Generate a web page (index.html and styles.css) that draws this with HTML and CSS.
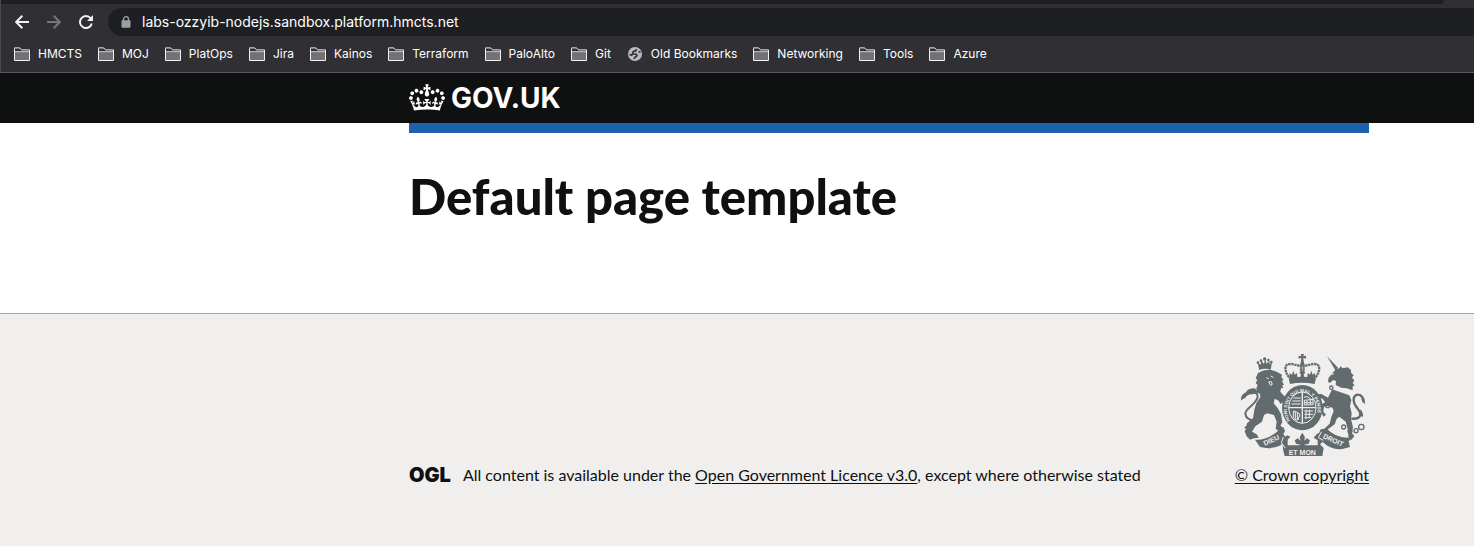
FILE: index.html
```
<!DOCTYPE html>
<html lang="en">
<head>
<meta charset="utf-8">
<title>Default page template</title>
<link rel="stylesheet" href="styles.css">
</head>
<body>
<svg class="defs" width="0" height="0" aria-hidden="true">
  <symbol id="folder" viewBox="0 0 16 14">
    <path d="M.5 1.5V.9h5.2l1.8 2h8v10.6H.5z" fill="none" stroke="#f1f1f1"/>
    <path d="M1 5.5h14V13H1z" fill="#727275"/>
    <path d="M1 4.8h14" stroke="#f1f1f1"/>
  </symbol>
</svg>
<div class="browser">
  <div class="tab-strip"></div>
  <div class="toolbar">
    <button class="tool" type="button" aria-label="Back"><svg width="14" height="14" viewBox="0 0 14 14"><path d="M14 7H1.5M7.3.8 1.2 7l6.1 6.2"/></svg></button>
    <button class="tool tool-off" type="button" aria-label="Forward"><svg width="14" height="14" viewBox="0 0 14 14"><path d="M0 7h12.5M6.7.8 12.8 7l-6.1 6.2"/></svg></button>
    <button class="tool" type="button" aria-label="Reload"><svg width="14" height="14" viewBox="0 0 14 14"><path d="M11.6 3.2A6 6 0 1 0 12.8 8.6"/><path class="solid" d="M14 0v6H8z"/></svg></button>
    <label class="address">
      <svg width="10" height="12" viewBox="0 0 10 12"><path d="M2.5 5V3.2a2.5 2.5 0 0 1 5 0V5" fill="none" stroke="#9aa0a6" stroke-width="1.3"/><rect x=".5" y="4.3" width="9" height="7.5" rx="1" fill="#9aa0a6"/></svg>
      <input class="address-input" type="text" aria-label="Address" value="labs-ozzyib-nodejs.sandbox.platform.hmcts.net">
    </label>
  </div>
  <nav class="bookmarks" aria-label="Bookmarks">
    <a href="#"><svg class="icon"><use href="#folder"/></svg>HMCTS</a>
    <a href="#"><svg class="icon"><use href="#folder"/></svg>MOJ</a>
    <a href="#"><svg class="icon"><use href="#folder"/></svg>PlatOps</a>
    <a href="#"><svg class="icon"><use href="#folder"/></svg>Jira</a>
    <a href="#"><svg class="icon"><use href="#folder"/></svg>Kainos</a>
    <a href="#"><svg class="icon"><use href="#folder"/></svg>Terraform</a>
    <a href="#"><svg class="icon"><use href="#folder"/></svg>PaloAlto</a>
    <a href="#"><svg class="icon"><use href="#folder"/></svg>Git</a>
    <a href="#"><svg class="icon" viewBox="-1 0 16 14"><circle cx="7" cy="7" r="7" fill="#b8bbc0"/><path d="M8.5 2.2Q8 4.6 5.6 4.4q-1.8 1.4-.4 2.6l3.2.2q1.2 2-.8 2.6-1.4.4-1.2 2.2M1.6 7.6l3 .6M10.6 4.6l2 .6" fill="none" stroke="#303034" stroke-width="1.7"/></svg>Old Bookmarks</a>
    <a href="#"><svg class="icon"><use href="#folder"/></svg>Networking</a>
    <a href="#"><svg class="icon"><use href="#folder"/></svg>Tools</a>
    <a href="#"><svg class="icon"><use href="#folder"/></svg>Azure</a>
  </nav>
</div>

<header class="header">
  <div class="container">
    <a class="logo" href="#">
      <svg class="crown" viewBox="0 0 132 97" aria-hidden="true"><path fill="currentColor" fill-rule="evenodd" d="M25 30.2c3.5 1.5 7.7-.2 9.1-3.7 1.5-3.6-.2-7.8-3.9-9.2-3.6-1.4-7.6.3-9.1 3.9-1.4 3.5.3 7.5 3.9 9zM9 39.5c3.6 1.5 7.8-.2 9.2-3.7 1.5-3.6-.2-7.8-3.9-9.1-3.6-1.5-7.6.2-9.1 3.8-1.4 3.5.3 7.5 3.8 9zM4.4 57.2c3.5 1.5 7.7-.2 9.1-3.8 1.5-3.6-.2-7.7-3.9-9.1-3.5-1.5-7.6.3-9.1 3.8-1.4 3.5.3 7.6 3.9 9.1zm38.3-21.4c3.5 1.5 7.7-.2 9.1-3.8 1.5-3.6-.2-7.7-3.9-9.1-3.6-1.5-7.6.3-9.1 3.8-1.3 3.6.4 7.7 3.9 9.1zm64.4-5.6c-3.6 1.5-7.8-.2-9.1-3.7-1.5-3.6.2-7.8 3.8-9.2 3.6-1.4 7.7.3 9.2 3.9 1.3 3.5-.4 7.5-3.9 9zm15.9 9.3c-3.6 1.5-7.7-.2-9.1-3.7-1.5-3.6.2-7.8 3.7-9.1 3.6-1.5 7.7.2 9.2 3.8 1.5 3.5-.3 7.5-3.8 9zm4.7 17.7c-3.6 1.5-7.8-.2-9.2-3.8-1.5-3.6.2-7.7 3.9-9.1 3.6-1.5 7.7.3 9.2 3.8 1.3 3.5-.4 7.6-3.9 9.1zM89.3 35.8c-3.6 1.5-7.8-.2-9.2-3.8-1.4-3.6.2-7.7 3.9-9.1 3.6-1.5 7.7.3 9.2 3.8 1.4 3.6-.3 7.7-3.9 9.1zM69.7 17.7l8.9 4.7V9.3l-8.9 2.8c-.2-.3-.5-.6-.9-.9L72.4 0H59.6l3.5 11.2c-.3.3-.6.5-.9.9l-8.8-2.8v13.1l8.8-4.7c.3.3.6.7.9.9l-5 15.4v.1c-.2.8-.4 1.6-.4 2.4 0 4.1 3.1 7.5 7 8.1h.2c.3 0 .7.1 1 .1.4 0 .7 0 1-.1h.2c4-.6 7.1-4.1 7.1-8.1 0-.8-.1-1.7-.4-2.4V34l-5.1-15.4c.4-.2.7-.6 1-.9zM66 92.8c16.9 0 32.8 1.1 47.1 3.2 4-16.9 8.9-26.7 14-33.5l-9.6-3.4c1 4.9 1.1 7.2 0 10.2-1.5-1.4-3-4.3-4.2-8.7L108.6 76c2.8-2 5-3.2 7.5-3.3-4.4 9.4-10 11.9-13.6 11.2-4.3-.8-6.3-4.6-5.6-7.9 1-4.7 5.7-5.9 8-.5 4.3-8.7-3-11.4-7.6-8.8 7.1-7.2 7.9-13.5 2.1-21.1-8 6.1-8.1 12.3-4.5 20.8-4.7-5.4-12.1-2.5-9.5 6.2 3.4-5.2 7.9-2 7.2 3.1-.6 4.3-6.4 7.8-13.5 7.2-10.3-.9-10.9-8-11.2-13.8 2.5-.5 7.1 1.8 11 7.3L80.2 60c-4.1 4.4-8 5.3-12.3 5.4 1.4-4.4 8-11.6 8-11.6H55.5s6.4 7.2 7.9 11.6c-4.2-.1-8-1-12.3-5.4l1.4 16.4c3.9-5.5 8.5-7.7 10.9-7.3-.3 5.8-.9 12.8-11.1 13.8-7.2.6-12.9-2.9-13.5-7.2-.7-5 3.8-8.3 7.1-3.1 2.7-8.7-4.6-11.6-9.4-6.2 3.7-8.5 3.6-14.7-4.6-20.8-5.8 7.6-5 13.9 2.2 21.1-4.7-2.6-11.9.1-7.7 8.8 2.3-5.5 7.1-4.2 8.1.5.7 3.3-1.3 7.1-5.7 7.9-3.5.7-9-1.8-13.5-11.2 2.5.1 4.7 1.3 7.5 3.3l-4.7-15.4c-1.2 4.4-2.7 7.2-4.3 8.7-1.1-3-.9-5.3 0-10.2l-9.5 3.4c5 6.9 9.9 16.7 14 33.5 14.8-2.1 30.8-3.2 47.7-3.2z"/></svg>
      <span>GOV.UK</span>
    </a>
  </div>
</header>
<main class="container main">
  <h1 class="heading">Default page template</h1>
</main>
<footer class="footer">
  <div class="container footer-row">
    <p class="licence">
      <span class="ogl">OGL</span>
      <span>All content is available under the <a href="#">Open Government Licence v3.0</a>, except where otherwise stated</span>
    </p>
    <a class="copyright" href="#">
      <svg class="arms" viewBox="33 27 375 306" aria-hidden="true">
        <g class="ink">
          <!-- lion -->
          <path d="M88 75 83 54l9 5 2-12 8 10 3-14 5 13 8-9 1 11 7-6-4 22q-18-6-34 1z"/>
          <circle cx="84" cy="53" r="4"/><circle cx="93" cy="47" r="4"/><circle cx="104" cy="42" r="5"/><circle cx="115" cy="45" r="4"/><circle cx="124" cy="51" r="4"/>
          <path d="M84 84q14-10 38-10l18 6 16 9-2 7 6 8-4 4 6 12-6 1 4 8-7 1-2 10 12 14 12 7 2 12-8-3-3 9-8-7-7 5-5-10-12-6-3 14 12 14 10 18 4 25-6 10 12 8-2 8-14 1-10-8 3-21-8-20-20-5-10 5-6 20-20 14-10 16 14 8 6 10-14 2-12 4-10-10-6-15 4-7-6-5 7-4 2-8 18-15 4-26 6-20 12-18-1-9-9-5-2-12 4-10-6-6 5-9-5-5z"/>
          <path d="M75 228q-28-4-29-22c0-18 36-28 37-52 0-10-9-13-18-9" fill="none" stroke="#626b6e" stroke-width="6"/>
          <path d="M66 148q-17 1-20 12-5-2-14 8 0-20 16-26 5-12 26-12 12 7 8 20-5-8-16-2z"/>
          <!-- unicorn -->
          <path d="m291 34 33 34-8 8z"/>
          <path d="m296 98 21-25 11-3 4-6 6 6 15-3 10 8 0 8 8 8-5 6 7 10-5 6 6 9-6 1 0 13-18-6-16-2-17-8 1-12-9-3-9 9-6-4z"/>
          <path d="m306 133 52 18 6 14-4 18 5 22-2 18 6 24-4 16 8 10-9 12-9-9-1-22-7-24-18-14-8 4-7 18-16 12-14 9-8 7-9-2 5-11 11-2 16-15 5-20 7-17-3-10-14-6-12 2-2 15 8 9-7 6-8-14-2-20 14-9-7-11-17-4 2-9 11-1 20 11z"/>
          <path d="M364 221q27 2 27-13c0-16-20-22-20-44 0-14 15-21 25-9q6 7 5 17" fill="none" stroke="#626b6e" stroke-width="7"/>
          <path d="M390 146q10 4 16 31-11-5-12-20zM391 193q9 8 8 23l-10-5z"/>
          <g fill="none" stroke="#626b6e" stroke-width="4"><circle cx="304" cy="128" r="5"/><circle cx="293" cy="182" r="6"/><circle cx="341" cy="246" r="6"/><circle cx="360" cy="258" r="6"/><circle cx="378" cy="257" r="6"/><circle cx="394" cy="246" r="8"/></g>
          <!-- crown -->
          <path d="M212 27h10l-2 7 8-2v9l-8-2 2 17h-10l2-17-8 2v-9l8 2zM176 99h82l-4 18q-38-7-74 0z"/>
          <circle cx="217" cy="57" r="6"/>
          <path d="M177 97c-16-22-14-41 5-40 14 0 26 9 32 2m43 38c16-22 14-41-5-40-14 0-26 9-32 2M213 61v25m8-25v25" fill="none" stroke="#626b6e" stroke-width="7" stroke-dasharray="7 2"/>
          <path d="m178 99 1-15 7 5 4-12 4 12 7-5 1 12 10-1 1-18h8l1 18 10 1 1-12 7 5 4-12 4 12 7-5 1 15z"/>
          <!-- garter and shield -->
          <ellipse cx="217" cy="188" rx="61" ry="68"/>
        </g>
        <ellipse cx="217" cy="188" rx="41" ry="47" fill="none" stroke="#f0efee" stroke-width="3"/>
        <path d="M217 142v92M177 188h80" stroke="#f0efee" stroke-width="4"/>
        <g fill="none" stroke="#f0efee" stroke-width="3">
          <path d="M190 159h22M187 168h25M184 177h28M222 157q10-6 16 2t14 4M223 166v14l26-1v-16zM231 166v13M241 165v14M223 173h25M190 198v19q3 10 14 8l6-17q-10-9-20-10zM196 201v20M202 204v19M223 198h26M223 208h26M223 218h21M228 194v29M238 194v24"/>
        </g>
        <path id="motto" d="M180 226A46 53 0 1 1 254 226" fill="none"/>
        <text class="motto"><textPath href="#motto">HONI SOIT QUI MAL Y PENSE</textPath></text>
        <g class="ink">
          <path d="M75 284q38 4 76-33l15 4-6 13 13 15q-31 36-83 23zM160 280l12-9 9 4-8 9v17h90v-15l-12-8 10-12 16-5 11-13q29 34 79 30l-11 11 4 17-23 6q-34 4-59-21l-8 7 11 11-4 24q-58 13-113 0-9-26-4-53z"/>
        </g>
        <path d="M186 262h62v34h-62z" fill="#f0efee"/>
        <path class="ink" d="m217 263 8 14-3 10 9-7 9 6-4 10-13 3 2 5h-16l2-5-13-3-4-10 9-6 9 7-3-10z"/>
        <path d="m160 276-6 17 12 16M275 260l-10 18 15 8" fill="none" stroke="#f0efee" stroke-width="3"/>
        <g class="ribbon">
          <text transform="translate(127 292) rotate(-24)">DIEU</text>
          <text x="217" y="329">ET MON</text>
          <text transform="translate(307 292) rotate(24)">DROIT</text>
        </g>
        <path d="m109 98 7 3M122 93l8 4M116 111l8-1 3 8-5 3zM305 89l7-3M311 125l45 16" fill="none" stroke="#f0efee" stroke-width="3"/>
      </svg>
      <span>© Crown copyright</span>
    </a>
  </div>
</footer>
</body>
</html>
```
FILE: styles.css
```
* { box-sizing: border-box; }
html { background: #f0efee; }
body { margin: 0; background: linear-gradient(#fff, #fff) top / 100% 313px no-repeat; font-family: Lato, "Open Sans", sans-serif; color: #0f1110; }
.defs { position: absolute; }

.browser { background: #303034; border-left: 1px solid #4b4b4e; border-bottom: 1px solid #58585a; font-family: Inter, Roboto, sans-serif; }
.tab-strip { height: 4px; margin-right: 30px; background: #1e1f23; border-bottom-right-radius: 8px; }
.toolbar { display: flex; align-items: center; padding: 4px 0 0 13px; gap: 16px; }
.tool { display: flex; width: 16px; padding: 1px; border: 0; background: none; color: #f1f1f1; }
.tool-off { color: #77777a; }
.tool svg { fill: none; stroke: currentColor; stroke-width: 2; }
.tool .solid { fill: currentColor; stroke: none; }
.address { display: flex; flex: 1; align-items: center; gap: 11px; height: 28px; margin-left: -2px; padding-left: 13px; background: #1e1f23; border-radius: 14px 0 0 14px; }
.address-input { flex: 1; padding: 0; border: 0; outline: 0; background: none; color: #fff; font: 400 14px/20px Inter, Roboto, sans-serif; }
.bookmarks { display: flex; gap: 16px; height: 36px; padding-left: 13px; align-items: center; }
.bookmarks a { display: flex; align-items: center; gap: 8px; color: #fff; font-size: 12px; line-height: 16px; text-decoration: none; white-space: nowrap; }
.icon { width: 16px; height: 14px; }

.container { max-width: 960px; margin: 0 105px 0 auto; }
.header { background: #0f1110; }
.header .container { height: 50px; }
.logo { display: inline-flex; align-items: center; gap: 6px; height: 50px; color: #fff; font: 700 28px/30px Inter, sans-serif; text-decoration: none; }
.crown { width: 36px; height: 27px; margin-bottom: 2px; }

.main { padding: 39px 0 93px; border-top: 10px solid #1c62ad; }
.heading { margin: 0; font-size: 49px; line-height: 48px; font-weight: 900; }

.footer { padding: 40px 0 60px; background: #f0efee; border-top: 1px solid #a3a6a5; font-size: 16px; line-height: 20px; }
.footer-row { display: flex; align-items: flex-end; justify-content: space-between; }
.licence { display: flex; align-items: center; gap: 12px; margin: 0; }
.licence a, .copyright { color: inherit; text-underline-offset: 2px; }
.ogl { font: 900 20px/20px Inter, sans-serif; }
.copyright { display: flex; flex-direction: column; align-items: flex-end; }
.arms { width: 125px; height: 102px; margin: 0 3px 9px 0; }
.ink { fill: #626b6e; }
.motto { fill: #f0efee; font: 700 14px "Liberation Sans", sans-serif; }
.ribbon { fill: #f0efee; font: 700 21px "Liberation Sans", sans-serif; text-anchor: middle; }
```
